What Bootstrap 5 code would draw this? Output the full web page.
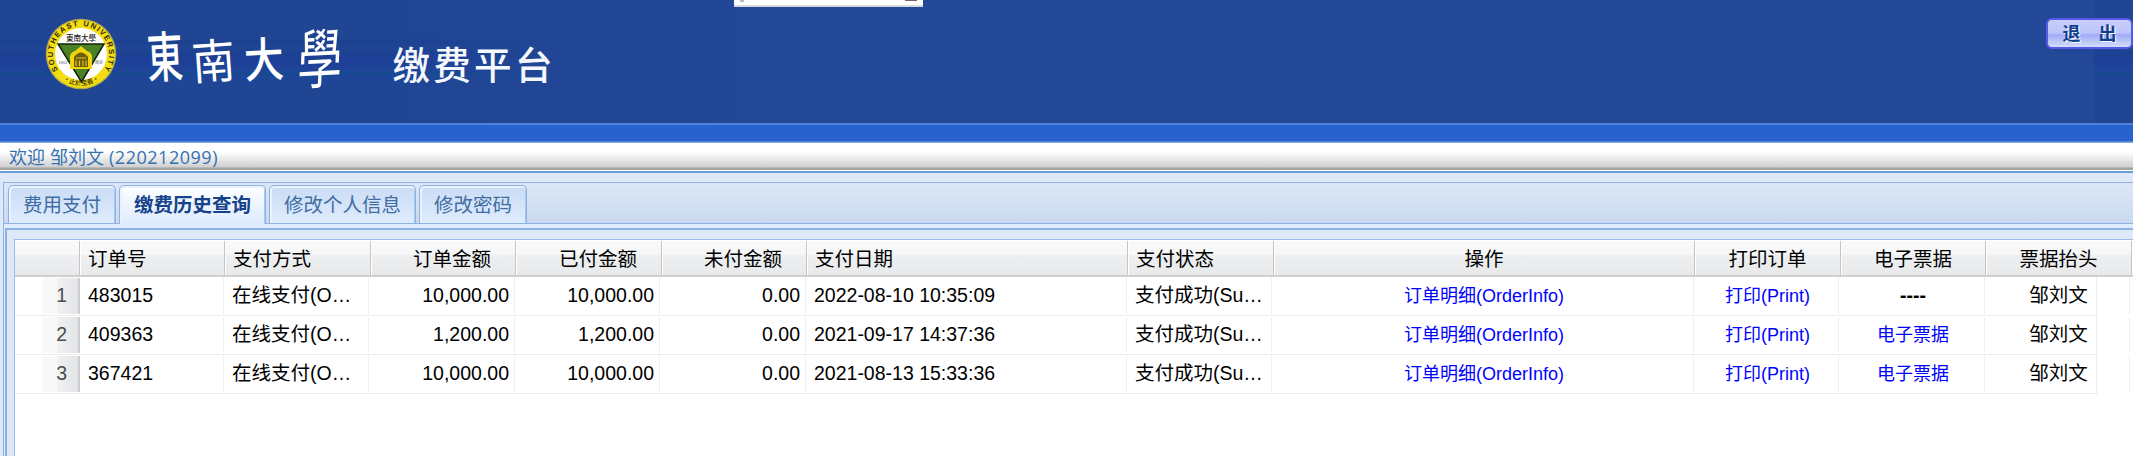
<!DOCTYPE html>
<html lang="zh-CN">
<head>
<meta charset="utf-8">
<title>东南大学缴费平台</title>
<link href="https://cdn.jsdelivr.net/npm/bootstrap@5.3.0/dist/css/bootstrap.min.css" rel="stylesheet">
<style>
body{font-family:"Liberation Sans","Noto Sans CJK SC",sans-serif;font-size:19.5px;font-weight:400;color:#000;background:#dfe8f6;height:456px;overflow:hidden;line-height:1.2}
.banner{height:123px;background:#224897;position:relative;flex:none}
.banner .streaks{background:linear-gradient(90deg,rgba(33,70,149,0) 400px,#214695 570px,#214695 700px,#224897 771px),linear-gradient(#1f4593 0 38px,#1c4190 42px,#204594 48px,#1c4092 54px,#1e3f97 60px,#1e459a 71px,#154a8e 73px,#1e4699 77px,#1f4593 88px);height:123px}
.strip{height:20px;background:linear-gradient(#5381da 0 2px,#2862ce 2px 18px,#7fa8de 19px);flex:none}
.welcome{height:28px;background:linear-gradient(#fff 0,#fff 9px,#d0d0d0 24px,#a0a0a0 25px,#aaa 27px,#fff 27px);color:#3372b0;font-size:18px;padding:3px 0 0 9px;line-height:22px;flex:none;white-space:nowrap}
.welcome .num{font-family:"Open Sans",sans-serif;letter-spacing:.52px}
.app{border-top:2px solid #699fd5;padding:9px 0 0 3px;height:285px}
.tabbox{border-left:1px solid #8db2e3;border-top:1px solid #8db2e3;height:274px}
.tabstrip{height:41px;background:linear-gradient(#dde8f6,#c9d9ef);border-bottom:1px solid #8db2e3;padding:2px 0 0 4px}
.tabstrip .nav-link{height:38px;border:1px solid #8db2e3;border-bottom:0;border-radius:5px 5px 0 0;background:linear-gradient(#cadcf5,#deecfd);box-shadow:inset 1px 1px 0 1px #e9f2fd,inset -1px 0 0 #a9c7ec;color:#416da3;padding:5px 0 0;text-align:center;line-height:29px;white-space:nowrap}
.tabstrip .nav-link.active{height:39px;background:linear-gradient(#fff,#eef5fe 45%,#deecfd);color:#15428b;font-weight:700}
.tabspace{height:4px;background:#deecfd}
.panelbody{border:2px solid #8db2e3;border-right:0;border-bottom:0;height:240px;padding:9px 0 0 7px;margin-left:1px}
.gridbox{background:#fff;border:1px solid #99bce8;border-right:0;border-bottom:0;height:230px;padding-top:1px}
.ghead{height:36px;background:linear-gradient(#f9f9f9,#f6f7f8 38%,#eeeff0 43%,#e7e9eb);border-bottom:2px solid #cfcfcf}
.ghead>div{border-right:1px solid #c5c5c5;box-shadow:1px 0 0 #fff;padding:0 8px;line-height:36px;height:34px;flex:none;white-space:nowrap}
.grow{height:39px;position:relative}
.rule{width:2082px;height:38px;border-right:1px solid #ededed;box-shadow:0 1px 0 #ededed;position:absolute;left:0;top:0}
.grow>.gc{border-right:1px solid #ededf3;height:36px;margin-top:1px;line-height:35px;padding:0 5px 0 8px;white-space:nowrap;flex:none}
.grow>.rn{background:linear-gradient(90deg,#fff 28px,#f8f8f9 28px 42px,#eff0f1 43px,#e2e4e7);border-right:2px solid #ccc;color:#4c4c4c;padding-right:11px}
.gc a{color:#00f;font-size:18px;text-decoration:none}
.logoff{width:87px;height:31px;left:2046px;top:18px;border:2px solid #5759e8;border-radius:6px;background:linear-gradient(#c9cefa 0,#bcc5fb 48%,#a0acf6 55%,#d3defb 100%);color:#123f8d;font-size:18px;font-weight:700;text-shadow:1px 1px 0 #fff;line-height:26px;padding:0;overflow:hidden;word-spacing:1px}
.hangtip{left:734px;width:189px;height:7px;background:#fff;border-bottom:2px solid #d6d9df}
.hangtip i{width:4px;height:2px;background:#bbb;left:6px}
.hangtip i+i{width:12px;height:1px;background:#766;left:171px}
</style>
</head>
<body class="d-flex flex-column">
<header class="banner d-flex justify-content-between">
  <div class="streaks" style="width:771px">
  <svg width="600" height="120" class="d-block">
    <defs><path id="ring" d="M59.300 71.600A28 28 0 1 1 102.700 71.600"/><path id="low" d="M62 79A31.500 31.500 0 0 0 100 79"/></defs>
    <circle cx="81" cy="54" r="35.300" fill="#b5a84e"/><circle cx="81" cy="54" r="34" fill="#f3dc10"/>
    <circle cx="81" cy="54" r="26" fill="#fff"/>
    <path d="M58 44H104L81.500 82Z" fill="#4b8126" stroke="#15220b" stroke-width="1.500"/>
    <path d="M70 69V56Q71 52 75 51L81 46L87 51Q91 52 92 56V69Z" fill="#f0d40e"/>
    <path d="M74 67V57Q81 48 88 57V67Z" fill="#6b5c10"/><path d="M76 58h10M76 60.500V66M79.500 60.500V66M83 60.500V66M86 60.500V66" stroke="#e2c810" stroke-width="1.200"/>
    <text font-family="Liberation Sans,sans-serif" font-weight="700" font-size="7.500" letter-spacing="1.450" fill="#2a2608"><textPath href="#ring" startOffset="2">SOUTHEAST UNIVERSITY</textPath></text>
    <text font-family="Noto Sans CJK SC,sans-serif" font-weight="500" font-size="6.500" fill="#332e08"><textPath href="#low" startOffset="1">·止於至善·</textPath></text>
    <text x="66" y="40.500" font-family="Noto Sans CJK TC,sans-serif" font-size="7.500" font-weight="500" fill="#222">東南大學</text>
    <text x="58.500" y="63.500" font-size="4" fill="#555">1902</text><text x="95" y="63.500" font-family="Noto Sans CJK SC,sans-serif" font-size="4" fill="#555">南京</text>
    <g fill="#fff" font-family="Noto Sans CJK TC,sans-serif" font-weight="500">
      <text transform="translate(148 78) rotate(-3) scale(.72 1.090)" font-size="50">東</text>
      <text transform="translate(193 80) rotate(-4) scale(.94 1.030)" font-size="46" font-weight="400">南</text>
      <text transform="translate(245 78) rotate(-3) scale(.88 1.050)" font-size="45">大</text>
      <text transform="translate(297 84) rotate(-3) skewX(-5) scale(.74 1.080)" font-size="60" font-weight="400">學</text>
    </g>
    <text x="392.500" y="79" font-family="Noto Sans CJK SC,sans-serif" font-size="37.500" font-weight="500" fill="#f4f7fc" letter-spacing="3.300">缴费平台</text>
  </svg>
  </div>
  <div class="streaks" style="width:39px"></div>
  <div class="hangtip position-absolute top-0"><i class="position-absolute"></i><i class="position-absolute"></i></div>
  <button class="btn logoff position-absolute">退&nbsp;&nbsp; 出</button>
</header>
<div class="strip"></div>
<div class="welcome">欢迎 邹刘文 <span class="num">(220212099)</span></div>
<main class="app">
 <div class="tabbox">
  <nav class="tabstrip nav d-flex flex-nowrap">
    <a href="#" class="nav-link" style="width:108px;margin-right:3px">费用支付</a>
    <a href="#" class="nav-link active" style="width:147px;margin-right:3px">缴费历史查询</a>
    <a href="#" class="nav-link" style="width:147px;margin-right:3px">修改个人信息</a>
    <a href="#" class="nav-link" style="width:108px">修改密码</a>
  </nav>
  <div class="tabspace"></div>
  <section class="panelbody"><div class="gridbox" id="grid"></div></section>
 </div>
</main>
<script src="https://cdn.jsdelivr.net/npm/bootstrap@5.3.0/dist/js/bootstrap.bundle.min.js"></script>
<script>
const heads=['','订单号','支付方式','订单金额','已付金额','未付金额','支付日期','支付状态','操作','打印订单','电子票据','票据抬头'];
const hw=[65,145,146,145,146,145,321,146,421,146,145,146];
const cw=[65,144,145,146,145,146,321,145,422,145,146,145];
const al=['end','start','start','end','end','end','start','start','center','center','center','center'];
const rows=[['483015','10,000.00','2022-08-10 10:35:09','<b>----</b>'],['409363','1,200.00','2021-09-17 14:37:36','<a href="#">电子票据</a>'],['367421','10,000.00','2021-08-13 15:33:36','<a href="#">电子票据</a>']];
let h='<div class="ghead d-flex">'+heads.map((t,i)=>`<div class="text-${al[i]}" style="width:${hw[i]}px${al[i]=='end'?';padding-right:24px':''}">${t}</div>`).join('')+'</div>';
rows.forEach((r,n)=>{
 const c=[n+1,r[0],'在线支付(O…',r[1],r[1],'0.00',r[2],'支付成功(Su…','<a href="#">订单明细(OrderInfo)</a>','<a href="#">打印(Print)</a>',r[3],'邹刘文'];
 h+='<div class="grow d-flex"><div class="rule"></div>'+c.map((t,i)=>`<div class="gc position-relative text-${al[i]}${i?'':' rn'}" style="width:${cw[i]}px">${t}</div>`).join('')+'</div>';
});
document.getElementById('grid').innerHTML=h;
</script>
</body>
</html>
